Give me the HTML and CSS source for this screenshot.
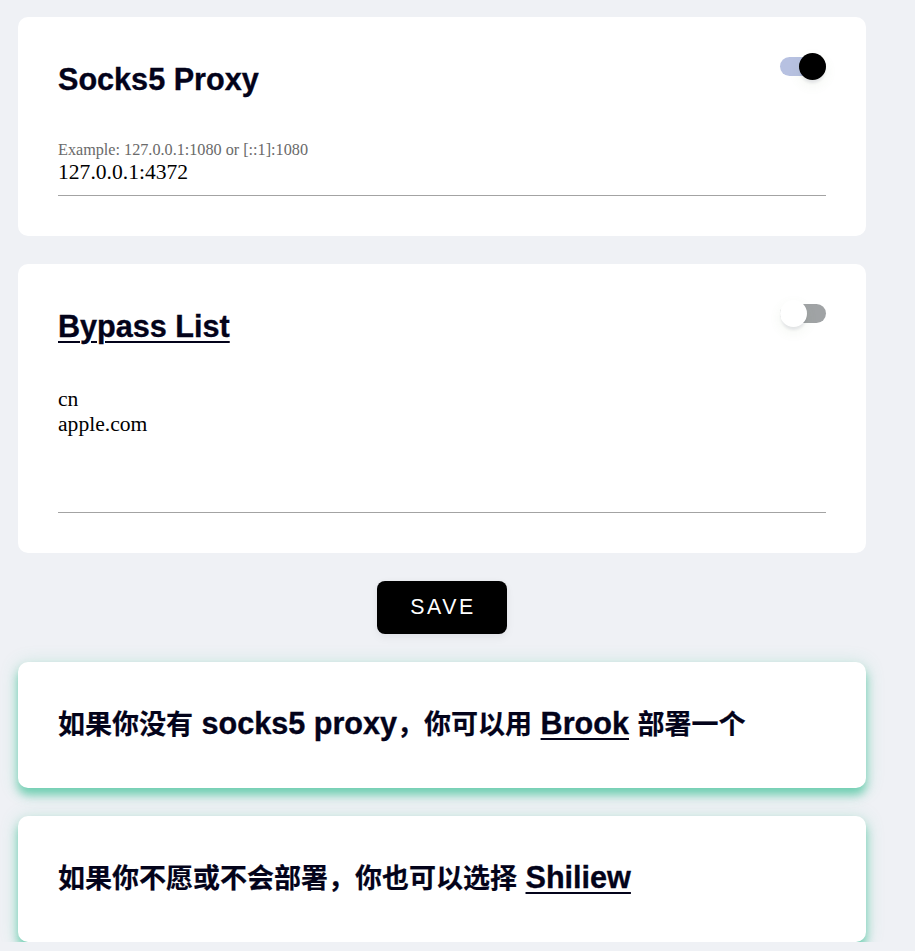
FILE: index.html
```html
<!DOCTYPE html>
<html lang="zh">
<head>
<meta charset="utf-8">
<title>Socks5 Proxy</title>
<link rel="stylesheet" href="styles.css">
</head>
<body>
<main class="page">
  <section class="card">
    <div class="card-head">
      <h2 class="title">Socks5 Proxy</h2>
      <span class="switch on"><span class="knob"></span></span>
    </div>
    <label class="field">
      <span class="field-label">Example: 127.0.0.1:1080 or [::1]:1080</span>
      <span class="field-value">127.0.0.1:4372</span>
    </label>
  </section>

  <section class="card">
    <div class="card-head">
      <h2 class="title"><a class="link" href="#">Bypass List</a></h2>
      <span class="switch off"><span class="knob"></span></span>
    </div>
    <div class="field area">
      <span class="field-value multi">cn
apple.com</span>
    </div>
  </section>

  <div class="actions">
    <button class="save">SAVE</button>
  </div>

  <section class="card note">
    <p class="note-text"><span class="zh">如果你没有</span> socks5 proxy<span class="zh">，你可以用</span> <a class="link" href="#">Brook</a> <span class="zh">部署一个</span></p>
  </section>

  <section class="card note">
    <p class="note-text"><span class="zh">如果你不愿或不会部署，你也可以选择</span> <a class="link" href="#">Shiliew</a></p>
  </section>
</main>
</body>
</html>
```

FILE: styles.css
```css
* { box-sizing: border-box; }

html, body {
  margin: 0;
  padding: 0;
  background: #eff1f5;
}

body {
  font-family: "Liberation Serif", "Times New Roman", serif;
  color: #000;
}

.page {
  width: 848px;
  margin-left: 18px;
  padding-top: 17px;
  display: flex;
  flex-direction: column;
  gap: 28px;
}

.card {
  background: #fff;
  border-radius: 10px;
  padding: 40px;
}

.card-head {
  display: flex;
  justify-content: space-between;
  align-items: flex-start;
}

.title {
  margin: 0;
  font-family: "Liberation Sans", Arial, "Noto Sans CJK SC", sans-serif;
  font-weight: 700;
  font-size: 30.6px;
  line-height: 44px;
  color: #03031a;
  -webkit-text-stroke: 0.35px #03031a;
}

.link {
  color: #03031a;
  text-decoration: underline;
  text-decoration-thickness: 2px;
  text-underline-offset: 4px;
}

.switch {
  position: relative;
  display: block;
  width: 46px;
  height: 19px;
  border-radius: 10px;
}

.switch.on { background: #b7c1e1; }
.switch.off { background: #a0a3a5; }

.knob {
  position: absolute;
  top: -4px;
  width: 27px;
  height: 27px;
  border-radius: 50%;
  box-shadow: 0 4px 3px -1px rgba(10, 10, 60, 0.09), 0 5px 10px 3px rgba(120, 150, 90, 0.05);
}

.switch.on .knob { right: 0; background: #000; }
.switch.off .knob { left: 0; background: #fff; }

.field {
  display: flex;
  flex-direction: column;
  margin-top: 40px;
  border-bottom: 1px solid #a3a3a3;
}

.field-label {
  font-size: 16.2px;
  line-height: 19px;
  color: #6a6a6a;
}

.field-value {
  font-size: 21.6px;
  line-height: 25px;
  padding-bottom: 10px;
  color: #000;
}

.field.area {
  margin-top: 39px;
  height: 126px;
}

.multi {
  white-space: pre-line;
  padding-bottom: 0;
}

.actions {
  display: flex;
  justify-content: center;
}

.save {
  width: 130px;
  height: 53px;
  border: none;
  border-radius: 8px;
  background: #000;
  color: #fff;
  font-family: "Liberation Sans", Arial, sans-serif;
  font-size: 21.33px;
  letter-spacing: 2.6px;
  padding: 0 0 0 2px;
  box-shadow: 0 4px 10px rgba(0, 0, 40, 0.05), 0 0 6px rgba(0, 0, 40, 0.03);
}

.note {
  padding: 38px 40px 42px;
  box-shadow: 0 7px 10px rgba(70, 195, 155, 0.7), 0 2px 18px rgba(70, 195, 155, 0.25);
}

.note-text {
  margin: 0;
  font-family: "Liberation Sans", Arial, sans-serif;
  font-weight: 700;
  font-size: 30.6px;
  line-height: 46px;
  color: #03031a;
  white-space: nowrap;
  -webkit-text-stroke: 0.35px #03031a;
}

.zh {
  font-family: "Noto Sans CJK SC", sans-serif;
  font-size: 27px;
  font-weight: 700;
  -webkit-text-stroke: 0.2px #03031a;
}
```
